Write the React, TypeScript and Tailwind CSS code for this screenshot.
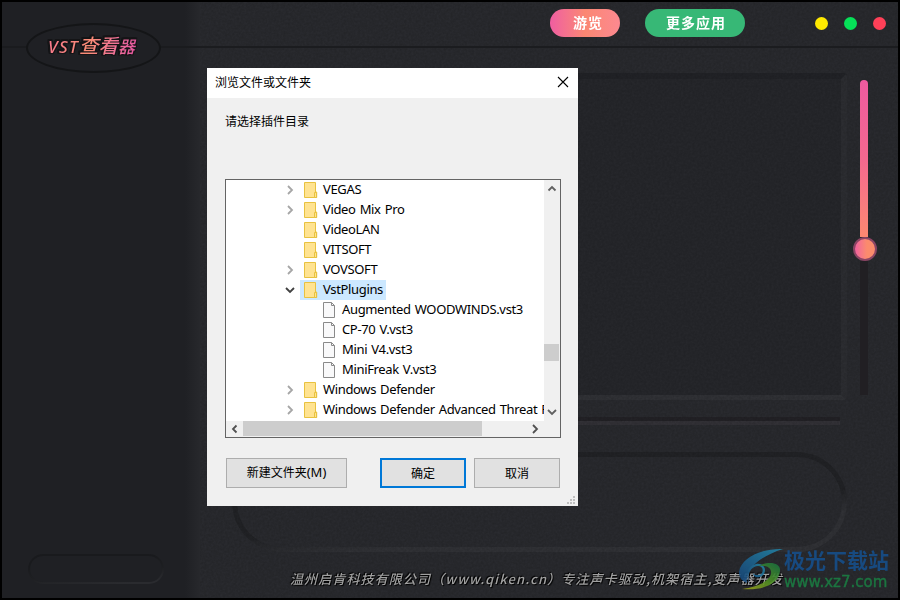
import React from 'react'

interface TreeItem {
  name: string
  type: 'folder' | 'file'
  state?: 'closed' | 'open'
  selected?: boolean
}

const treeItems: TreeItem[] = [
  { name: 'VEGAS', type: 'folder', state: 'closed' },
  { name: 'Video Mix Pro', type: 'folder', state: 'closed' },
  { name: 'VideoLAN', type: 'folder' },
  { name: 'VITSOFT', type: 'folder' },
  { name: 'VOVSOFT', type: 'folder', state: 'closed' },
  { name: 'VstPlugins', type: 'folder', state: 'open', selected: true },
  { name: 'Augmented WOODWINDS.vst3', type: 'file' },
  { name: 'CP-70 V.vst3', type: 'file' },
  { name: 'Mini V4.vst3', type: 'file' },
  { name: 'MiniFreak V.vst3', type: 'file' },
  { name: 'Windows Defender', type: 'folder', state: 'closed' },
  { name: 'Windows Defender Advanced Threat P', type: 'folder', state: 'closed' },
]

const FolderIcon = () => (
  <svg width="14" height="16" viewBox="0 0 14 16" className="shrink-0">
    <path d="M.5.5h11v9.5h1.2v5.5H.5z" fill="#ffe391" stroke="#e8c240" />
    <path d="M10.5 15.5V10.5h2v5z" fill="#ffe391" stroke="#e8c240" />
  </svg>
)

const FileIcon = () => (
  <svg width="12" height="16" viewBox="0 0 12 16" className="shrink-0">
    <path d="M.5.5h8l3 3v12H.5z" fill="#f9f9fa" stroke="#8a8a8a" />
    <path d="M8.5.5v3h3" fill="none" stroke="#8a8a8a" />
  </svg>
)

const Chevron = ({ dir, color }: { dir: 'up' | 'down' | 'left' | 'right'; color: string }) => {
  const paths = {
    up: 'M1.5 6.5 5 3l3.5 3.5',
    down: 'M1 3l4 4 4-4',
    left: 'M6.5 1.5 3 5l3.5 3.5',
    right: 'M3 1l4 4-4 4',
  }
  return (
    <svg width="10" height="10" viewBox="0 0 10 10">
      <path d={paths[dir]} fill="none" stroke={color} strokeWidth="1.8" />
    </svg>
  )
}

const TreeRow = ({ item }: { item: TreeItem }) => (
  <div className={item.type === 'file' ? 'flex h-5 items-center pl-[93px]' : 'flex h-5 items-center pl-[59px]'}>
    {item.type === 'folder' && (
      <span className="flex w-[15px] shrink-0">
        {item.state === 'closed' && <Chevron dir="right" color="#a6a6a6" />}
        {item.state === 'open' && <Chevron dir="down" color="#404040" />}
      </span>
    )}
    <span
      className={
        item.selected
          ? 'flex h-5 items-center gap-[5px] bg-[#cce8ff] pl-1 pr-[3px]'
          : 'flex h-5 items-center gap-[5px] pl-1'
      }
    >
      {item.type === 'folder' ? <FolderIcon /> : <FileIcon />}
      <span className={item.type === 'file' ? 'pl-[2px]' : ''}>{item.name}</span>
    </span>
  </div>
)

const Sidebar = () => (
  <aside className="flex w-[198px] shrink-0 flex-col justify-between bg-[linear-gradient(to_right,#1f2024_183px,#27282c_198px)] pt-[21px] pb-[14px]">
    <div className="flex items-center">
      <div className="mb-[3px] h-[2px] w-6 bg-[#1a1b1e]" />
      <div className="flex h-[50px] w-[135px] items-center justify-center rounded-[50%] border-2 border-[#141517]">
        <h1 className="mb-[4px] flex items-baseline bg-[linear-gradient(100deg,#f7788c,#fb8d76_45%,#f0709a_75%,#e0509f)] bg-clip-text pr-1 italic leading-6 text-transparent [filter:drop-shadow(1.5px_0_0_#141416)_drop-shadow(-1.5px_0_0_#141416)_drop-shadow(0_1.5px_0_#141416)_drop-shadow(0_-1.5px_0_#141416)]">
          <span className="font-['Noto_Sans'] text-[17px] font-medium tracking-[1.4px]">VST</span>
          <span className="text-[19.5px] font-medium">查看</span>
          <span className="text-[17px] font-medium">器</span>
        </h1>
      </div>
      <div className="mb-[3px] h-[2px] flex-1 bg-[#1a1b1e]" />
    </div>
    <div className="ml-[26px] h-[30px] w-[136px] rounded-full bg-[linear-gradient(175deg,#191a1d_30%,#1e1f22_60%,#2a2b2f_90%)] p-[2px]">
      <div className="h-full rounded-full bg-[#1f2024]" />
    </div>
  </aside>
)

const TopBar = () => (
  <header className="relative z-10 flex h-[46px] shrink-0 border-b-2 border-[#1b1c1f] pt-[7px] pr-[12px]">
    <button className="ml-[350px] h-7 w-[70px] rounded-full bg-linear-to-r from-[#ef5da0] via-[#fb8772] to-[#fc8990] pb-px pl-[6px] text-[14px] font-bold tracking-[1px] text-white">
      游览
    </button>
    <button className="ml-[25px] h-7 w-[100px] rounded-full bg-[#37b876] pb-px pl-[2px] text-[14px] font-bold tracking-[1px] text-white">
      更多应用
    </button>
    <div className="ml-auto flex h-7 items-center gap-4">
      <span className="h-[13px] w-[13px] rounded-full bg-[#ffe900]" />
      <span className="h-[13px] w-[13px] rounded-full bg-[#06e058]" />
      <span className="h-[13px] w-[13px] rounded-full bg-[#ff4058]" />
    </div>
  </header>
)

const VolumeSlider = () => (
  <div className="relative z-10 mt-[7px] ml-[11px] flex h-[315px] w-3 flex-col items-center">
    <div className="h-[157px] w-2 rounded-t-full bg-linear-to-b from-[#ee5a9f] via-[#f4688f] to-[#fc8870]" />
    <div className="ml-[2px] h-6 w-6 shrink-0 rounded-full border-2 border-[#8a4463] bg-linear-to-r from-[#f0609d] to-[#fb8b6c] to-60%" />
    <div className="w-2 flex-1 bg-[#211f23]" />
  </div>
)

// Fine grain on the right hand surface
const Grain = () => (
  <svg
    width="698"
    height="596"
    className="pointer-events-none absolute top-0 right-0 opacity-[0.12] mix-blend-overlay"
  >
    <filter id="grain" x="0" y="0" width="100%" height="100%" colorInterpolationFilters="sRGB">
      <feTurbulence type="fractalNoise" baseFrequency="0.43" numOctaves="3" />
      <feColorMatrix type="matrix" values="1 0 0 0 0 1 0 0 0 0 1 0 0 0 0 0 0 0 0 1" />
    </filter>
    <rect width="698" height="596" filter="url(#grain)" />
  </svg>
)

const Watermark = () => (
  <div className="absolute right-[9px] bottom-[6px] z-10 flex items-center">
    <svg width="46" height="44" viewBox="0 0 46 44" className="opacity-90">
      <defs>
        <linearGradient id="wave" x1="0" y1="1" x2="1" y2="0">
          <stop offset="0" stopColor="#174578" />
          <stop offset="1" stopColor="#2386a8" />
        </linearGradient>
        <linearGradient id="leaf" x1="0" y1="1" x2="1" y2="0">
          <stop offset="0" stopColor="#a3a01c" />
          <stop offset="0.5" stopColor="#4f8f24" />
          <stop offset="1" stopColor="#166e40" />
        </linearGradient>
      </defs>
      <path d="M45 1C25 0 3 9 1 24c0 6 3 9 8 11C7 22 20 9 45 1z" fill="url(#wave)" />
      <path d="M12 36C8 27 13 18 20 18c5 0 6 5 3 8-3 2-7 1-8-1 0 5 8 6 11 1 3-6-1-11-8-10-8 2-12 11-6 20z" fill="url(#wave)" />
      <path d="M20 18c10-5 23-4 22 5-1 13-18 20-38 18 14-2 27-7 29-15 1-6-4-9-13-8z" fill="url(#leaf)" />
    </svg>
    <div className="flex w-[105px] flex-col gap-[2px] pb-px">
      <span className="text-[21px] leading-[23px] font-bold whitespace-nowrap text-[#174a80]">极光下载站</span>
      <span className="font-['DejaVu_Sans'] text-[15px] leading-[18px] whitespace-nowrap text-[#1c7540] [-webkit-text-stroke:0.4px_#1c7540]">
        www.xz7.com
      </span>
    </div>
  </div>
)

const BrowseDialog = () => (
  <div className="absolute top-[66px] left-[205px] z-20 flex h-[438px] w-[371px] flex-col bg-[#f0f0f0] text-[12px] text-black">
    <div className="flex h-[30px] shrink-0 items-center justify-between bg-white pr-[9px] pb-[2px] pl-2">
      <span>浏览文件或文件夹</span>
      <svg width="12" height="12" viewBox="0 0 12 12">
        <path d="M1 1l10 10M11 1L1 11" stroke="#000" strokeWidth="1.1" />
      </svg>
    </div>
    <p className="mt-[14px] ml-[18px] h-[67px] leading-[18px]">请选择插件目录</p>

    {/* Folder tree with both scrollbars */}
    <div className="ml-[18px] flex h-[259px] w-[336px] shrink-0 border border-[#646464] bg-white">
      <div className="flex w-[318px] flex-col">
        <div className="h-[241px] overflow-hidden font-['Noto_Sans'] text-[13px] tracking-[-0.35px] whitespace-nowrap [word-spacing:1px]">
          {treeItems.map((item) => (
            <TreeRow key={item.name} item={item} />
          ))}
        </div>
        <div className="flex h-4 items-center bg-[#f0f0f0] pb-px">
          <span className="flex w-[17px] justify-center">
            <Chevron dir="left" color="#505050" />
          </span>
          <span className="h-[15px] w-[239px] bg-[#cdcdcd]" />
          <span className="ml-auto mr-1 flex">
            <Chevron dir="right" color="#505050" />
          </span>
        </div>
      </div>
      <div className="flex flex-1 flex-col bg-[#f0f0f0]">
        <span className="flex h-[17px] items-center justify-center pr-px">
          <Chevron dir="up" color="#606060" />
        </span>
        <span className="mt-[147px] h-[17px] w-[15px] bg-[#cdcdcd]" />
        <span className="mt-[42px] flex h-[17px] items-center justify-center pr-px">
          <Chevron dir="down" color="#606060" />
        </span>
      </div>
    </div>

    <div className="mt-5 ml-[19px] flex">
      <button className="h-[30px] w-[121px] border border-[#adadad] bg-[#e1e1e1] pb-px">
        新建文件夹<span className="font-['Noto_Sans'] text-[13px]">(M)</span>
      </button>
      <button className="ml-[33px] h-[30px] w-[86px] border-2 border-[#0078d7] bg-[#e1e1e1] pb-px">确定</button>
      <button className="ml-2 h-[30px] w-[86px] border border-[#adadad] bg-[#e1e1e1] pb-px">取消</button>
    </div>

    <svg width="8" height="8" viewBox="0 0 8 8" className="absolute right-[3px] bottom-[2px]">
      <path d="M6 0h2v2H6zM3 3h2v2H3zM6 3h2v2H6zM0 6h2v2H0zM3 6h2v2H3zM6 6h2v2H6z" fill="#bfbfbf" />
    </svg>
  </div>
)

export default function App() {
  return (
    <div className="relative flex h-[600px] w-[900px] overflow-hidden border-2 border-black bg-[#26272b] font-['Noto_Sans_CJK_SC',sans-serif]">
      <Sidebar />
      <main className="flex flex-1 flex-col">
        <TopBar />
        <div className="mt-[25px] ml-8 flex">
          <div className="h-[327px] w-[615px] rounded border-t-[6px] border-r-[6px] border-b-[5px] border-l-[6px] border-t-[#1f2024] border-r-[#292a2e] border-b-[#2d2e32] border-l-[#1f2024] bg-[#232428]" />
          <VolumeSlider />
        </div>
        <div className="mt-[17px] ml-8 h-2 w-[608px] border-t-4 border-b-4 border-t-[#201f23] border-b-[#2f2e33]" />
        <div className="mt-[27px] ml-8 h-[100px] w-[615px] rounded-[50px] bg-[linear-gradient(175.35deg,#1f2023_58%,#2d2e32_73%)] p-[5px]">
          <div className="h-full rounded-[45px] bg-[#26272b]" />
        </div>
        <footer className="relative z-10 mt-[17px] ml-[90px] text-[13px] leading-5 font-medium tracking-[1.12px] whitespace-nowrap text-[#a0a0a0] italic [text-shadow:1px_1px_1px_#000,-1px_-1px_1px_#000]">
          温州启肯科技有限公司（www.qiken.cn）专注声卡驱动,机架宿主,变声器开发
        </footer>
      </main>
      <Grain />
      <Watermark />
      <BrowseDialog />
    </div>
  )
}
